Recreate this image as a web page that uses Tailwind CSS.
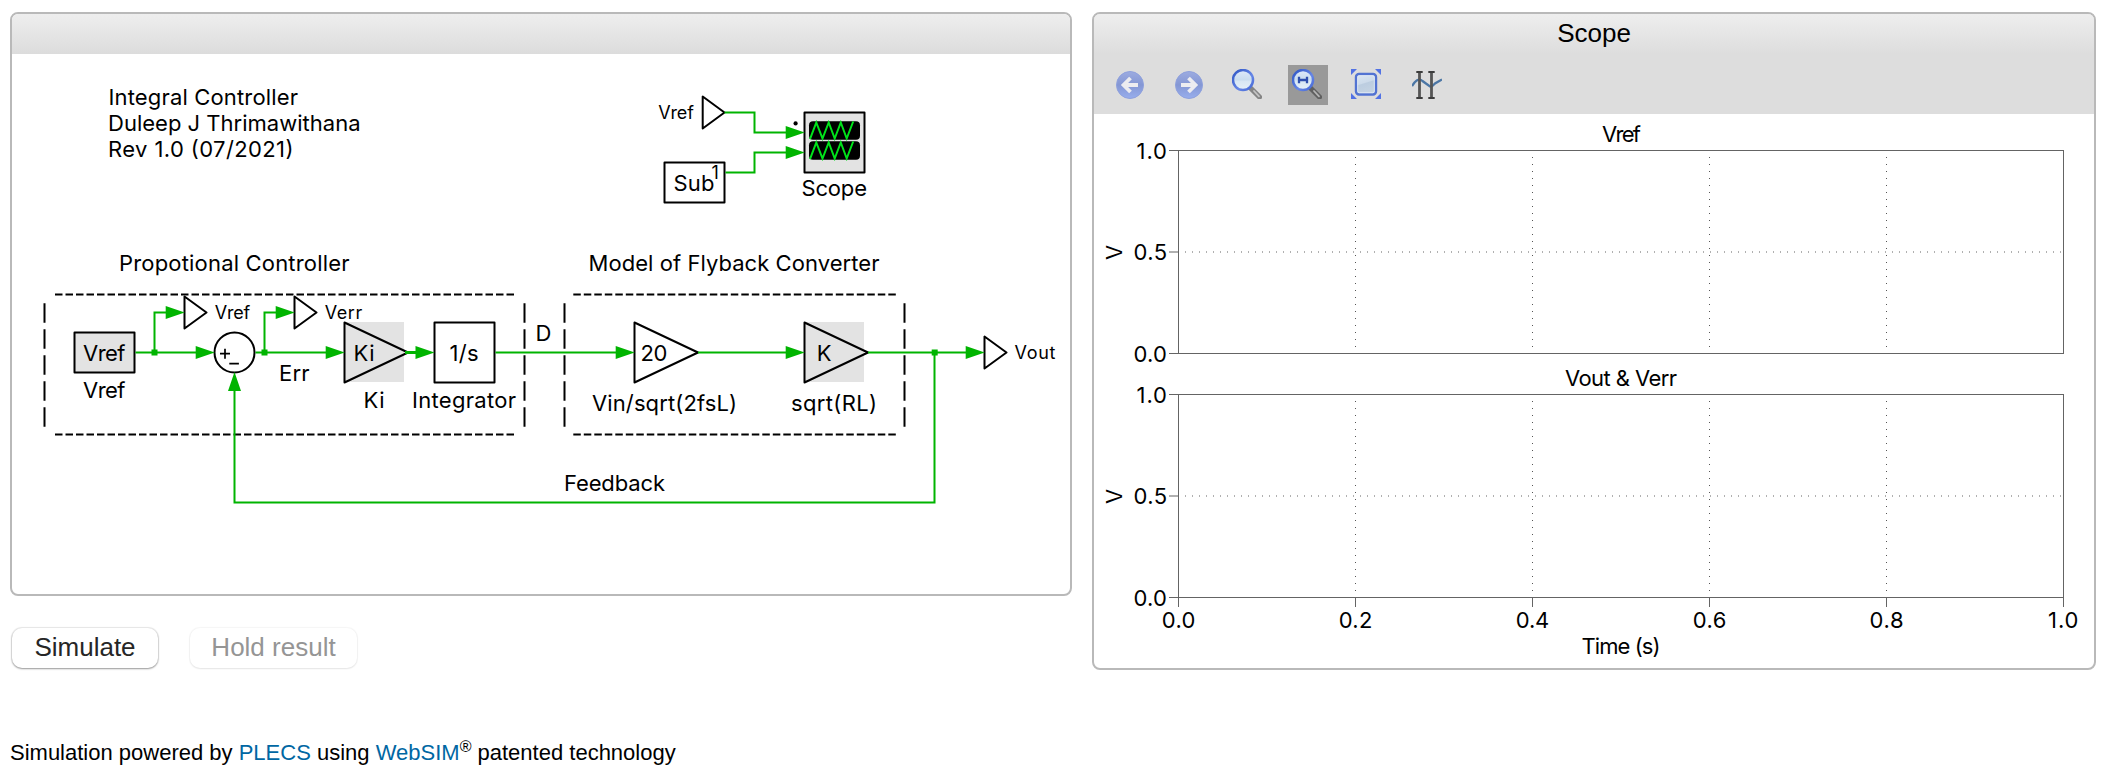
<!DOCTYPE html>
<html lang="en">
<head>
<meta charset="utf-8">
<title>Integral Controller</title>
<script src="https://cdn.jsdelivr.net/npm/@tailwindcss/browser@4"></script>
</head>
<body class="bg-white text-black font-['Liberation_Sans',Arial,sans-serif] overflow-hidden">
<main class="pt-3 pl-2.5">
  <div class="flex items-start gap-5">
    <div class="flex flex-col">
      <section class="w-[1062px] h-[584px] rounded-[8px] border-2 border-[#b9b9b9] overflow-hidden flex flex-col">
        <header class="h-10 shrink-0 bg-linear-to-b from-[#eeeeee] to-[#dcdcdc]"></header>
        <svg class="block w-[1058px] h-[540px] font-['Inter',sans-serif]" viewBox="12 54 1058 540">
          <g fill="none" stroke="#000" stroke-width="2">
            <path stroke-dasharray="7.5 3" d="M55 294.5H514.3M55 434.5H514.3M573.3 294.5H896M573.3 434.5H896"/>
            <path stroke-dasharray="19.4 6.6" d="M44.5 303.3V426.8M524.5 303.3V426.8M564.5 303.3V426.8M904.5 303.3V426.8"/>
          </g>
          <!-- Blocks -->
          <g fill="#e3e3e3">
            <rect x="344.5" y="322" width="59.5" height="60"/>
            <rect x="804.5" y="322" width="59.5" height="60"/>
          </g>
          <g fill="none" stroke="#000" stroke-width="2" stroke-linejoin="round">
            <rect x="74.5" y="332.5" width="60" height="40" fill="#e3e3e3"/>
            <rect x="434.5" y="322.5" width="60" height="60"/>
            <rect x="664.5" y="162.5" width="60" height="40"/>
            <rect x="804.5" y="112.5" width="60" height="60" fill="#e3e3e3"/>
            <circle cx="234.5" cy="352.5" r="20"/>
            <path stroke-width="1.7" d="M220 353.7h10M225 348.7v10M229.3 363.7h9.6"/>
            <path d="M344.5 322.5V382.5L408 352.5ZM634.5 322.5V382.5L698 352.5ZM804.5 322.5V382.5L868 352.5Z"/>
            <path d="M184.5 296.5V328.5L206.5 312.5ZM294.5 296.5V328.5L316.5 312.5ZM702.7 96.5V128.5L724.5 112.5ZM984.5 336.5V368.5L1006.5 352.5Z"/>
          </g>
          <!-- Scope screens -->
          <rect x="809" y="121.2" width="51" height="18.6" rx="4"/>
          <rect x="809" y="141.3" width="51" height="18.4" rx="4"/>
          <g fill="none" stroke="#00e31a" stroke-width="2">
            <path d="M810 139.2L816.3 122.5L822.5 138.5L828.7 122.5L834.7 138.5L840.8 122.5L846.7 138.5L853.2 121.5"/>
            <path d="M810 159.2L816.3 142.5L822.5 158.5L828.7 142.5L834.7 158.5L840.8 142.5L846.7 158.5L853.2 141.5"/>
          </g>
          <circle cx="795.6" cy="123.4" r="2.1"/>
          <!-- Signals -->
          <g fill="none" stroke="#00b400" stroke-width="2">
            <path d="M135.5 352.5H196M154.5 352.5V312.5H166M255.5 352.5H326M264.5 352.5V312.5H276M495.5 352.5H616M698 352.5H786M868 352.5H966M934.5 352.5V502.5H234.5V390"/>
            <path d="M724.5 112.5H754.5V132.5H786M725.5 172.5H754.5V152.5H786"/>
            <path stroke-width="3" d="M405 352.5H416"/>
          </g>
          <g fill="#00b400">
            <path d="M195.7 346v13l19-6.500zM165.700 306v13l19-6.500zM275.700 306v13l19-6.500zM325.700 346v13l19-6.500zM415.500 346v13l19-6.500zM615.700 346v13l19-6.500zM785.700 346v13l19-6.500zM965.700 346v13l19-6.500zM785.700 126v13l19-6.500zM785.700 146v13l19-6.500zM228 391h13l-6.500-19z"/>
            <rect x="151.500" y="349.500" width="6" height="6"/>
            <rect x="261.500" y="349.500" width="6" height="6"/>
            <rect x="931.700" y="349.500" width="6" height="6"/>
          </g>
          <g font-size="22">
            <text x="108.500" y="105.200" textLength="189.500">Integral Controller</text>
            <text x="108" y="131.200" textLength="252.500">Duleep J Thrimawithana</text>
            <text x="108" y="157" textLength="185.500">Rev 1.0 (07/2021)</text>
            <text x="119" y="271" textLength="230.500">Propotional Controller</text>
            <text x="588.500" y="271" textLength="291">Model of Flyback Converter</text>
            <text x="83" y="361" textLength="42.500">Vref</text>
            <text x="83" y="397.800" textLength="42.500">Vref</text>
            <text x="279" y="381" textLength="30.500">Err</text>
            <text x="353.500" y="361" textLength="21">Ki</text>
            <text x="363.500" y="408" textLength="21">Ki</text>
            <text x="449.500" y="361" textLength="29">1/s</text>
            <text x="412" y="408" textLength="104">Integrator</text>
            <text x="535.500" y="341">D</text>
            <text x="640.500" y="361" textLength="27">20</text>
            <text x="592" y="411" textLength="145">Vin/sqrt(2fsL)</text>
            <text x="816.800" y="361">K</text>
            <text x="791" y="411" textLength="86">sqrt(RL)</text>
            <text x="564" y="490.800" textLength="101">Feedback</text>
            <text x="801.500" y="195.500" textLength="65.500">Scope</text>
            <text x="673.500" y="191" textLength="41">Sub</text>
          </g>
          <g font-size="18">
            <text x="658.300" y="119" textLength="35.500">Vref</text>
            <text x="711.500" y="179">1</text>
            <text x="214.700" y="319.200" textLength="35.500">Vref</text>
            <text x="324.700" y="319.200" textLength="37.500">Verr</text>
            <text x="1014.500" y="359" textLength="41">Vout</text>
          </g>
        </svg>
      </section>
      <div class="flex gap-8 pl-0.5 pt-8">
        <button class="w-[146px] h-10 rounded-[10px] bg-white text-[26px] leading-[38px] pb-0.5 text-[#262626] shadow-[0_0_1px_1px_rgba(0,0,0,0.09),0_1px_2px_rgba(0,0,0,0.35)]">Simulate</button>
        <button class="w-[167px] h-10 rounded-[10px] bg-white text-[26px] leading-[38px] pb-0.5 text-[#959595] shadow-[0_0_1px_1px_rgba(0,0,0,0.04),0_1px_2px_rgba(0,0,0,0.07)]" disabled>Hold result</button>
      </div>
    </div>

    <section class="w-[1004px] h-[658px] rounded-[8px] border-2 border-[#b9b9b9] overflow-hidden flex flex-col">
      <header class="h-[100px] shrink-0 bg-[#dddddd]">
        <h1 class="h-10 bg-linear-to-b from-[#eeeeee] to-[#dddddd] text-[26px] leading-[38px] text-center">Scope</h1>
        <div class="flex gap-[19.33px] pl-4 pt-[11px]">
          <div class="w-10 h-10 pl-[5px] pt-[5px]">
            <svg class="w-[30px] h-[30px]" viewBox="0 0 30 30">
              <defs><linearGradient id="disc" x2="0" y2="1"><stop stop-color="#9cabe0"/><stop offset=".5" stop-color="#8497d4"/><stop offset="1" stop-color="#98aeed"/></linearGradient></defs>
              <circle cx="15" cy="15" r="13.500" fill="url(#disc)" stroke="#8ea0dc"/>
              <path d="M23 15H9M15.500 8L8.500 15L15.500 22" fill="none" stroke="#ececf0" stroke-width="3.800"/>
            </svg>
          </div>
          <div class="w-10 h-10 pl-[5px] pt-[5px]">
            <svg class="w-[30px] h-[30px]" viewBox="0 0 30 30">
              <circle cx="15" cy="15" r="13.500" fill="url(#disc)" stroke="#8ea0dc"/>
              <path d="M7 15H21M14.500 8L21.500 15L14.500 22" fill="none" stroke="#ececf0" stroke-width="3.800"/>
            </svg>
          </div>
          <div class="w-10 h-10 pl-[3px] pt-1">
            <svg class="w-[30px] h-[30px]" viewBox="0 0 30 30">
              <defs>
                <linearGradient id="rim" x2="1" y2="1"><stop stop-color="#2e55c4"/><stop offset=".6" stop-color="#6686e6"/><stop offset="1" stop-color="#4468d4"/></linearGradient>
                <linearGradient id="glass" x2="0" y2="1"><stop stop-color="#dfeafa"/><stop offset=".5" stop-color="#c9dcee"/><stop offset=".55" stop-color="#d8e7f4"/><stop offset="1" stop-color="#e6f0f8"/></linearGradient>
              </defs>
              <path d="M19 19.500L27.500 28" stroke="#858585" stroke-width="5.200" stroke-linecap="round"/>
              <path d="M22 22L27 27.300" stroke="#c4c4c4" stroke-width="1.800" stroke-linecap="round"/>
              <circle cx="11" cy="11" r="10" fill="url(#glass)" stroke="url(#rim)" stroke-width="2.500"/>
            </svg>
          </div>
          <div class="w-10 h-10 pl-1 pt-1 bg-[#999999]">
            <svg class="w-[30px] h-[30px]" viewBox="0 0 30 30">
              <path d="M19 19.500L27.500 28" stroke="#606060" stroke-width="5.200" stroke-linecap="round"/>
              <path d="M22 22L27 27.300" stroke="#b4b4b4" stroke-width="1.800" stroke-linecap="round"/>
              <circle cx="11" cy="11" r="10" fill="url(#glass)" stroke="url(#rim)" stroke-width="2.500"/>
              <path d="M7 7.800V14.200M15 7.800V14.200M7 11H15" stroke="#2f4fae" stroke-width="2.300" fill="none"/>
            </svg>
          </div>
          <div class="w-10 h-10 pl-1 pt-1">
            <svg class="w-[30px] h-[30px]" viewBox="0 0 30 30">
              <defs><linearGradient id="pane" x2=".3" y2="1"><stop stop-color="#dce7f3"/><stop offset=".5" stop-color="#cddbea"/><stop offset=".55" stop-color="#bccde0"/><stop offset="1" stop-color="#c4d3e2"/></linearGradient></defs>
              <path d="M0 0H6L0 6ZM24 0H30V6ZM0 24V30H6ZM30 24V30H24Z" fill="#5272e4"/>
              <rect x="5" y="5" width="20" height="20.500" rx="3" fill="url(#pane)" stroke="#5273d2" stroke-width="2.400"/>
              <rect x="6.700" y="6.700" width="16.600" height="17" rx="1.500" fill="none" stroke="#e4ecf6" stroke-width=".8"/>
            </svg>
          </div>
          <div class="w-10 h-10 pl-[5px] pt-1">
            <svg class="w-[30px] h-[30px]" viewBox="0 0 30 30">
              <path d="M0 17L2.500 13.500Q7 8.500 10.500 12L18 17.500Q20 18 23 14.500L30 10.500" fill="none" stroke="#4b76a5" stroke-width="2.300"/>
              <path d="M7.500 3V29M19.500 3V29" stroke="#555" stroke-width="2.800"/>
              <path d="M4.300 3H10.700M4.300 29H10.700M16.300 3H22.700M16.300 29H22.700" stroke="#3c3c3c" stroke-width="2"/>
            </svg>
          </div>
        </div>
      </header>
      <svg class="block w-[1000px] h-[554px] font-['Inter',sans-serif]" viewBox="1094 114 1000 554" font-size="22">
        <g fill="none" shape-rendering="crispEdges">
          <g stroke="#555" stroke-width="1" stroke-dasharray="1 6">
            <path d="M1355.500 150V353M1532.500 150V353M1709.500 150V353M1886.500 150V353"/>
            <path d="M1355.500 394V597M1532.500 394V597M1709.500 394V597M1886.500 394V597"/>
          </g>
          <path stroke="#b0b0b0" stroke-width="2" stroke-dasharray="1 6" d="M1178 252H2063M1178 496H2063"/>
          <path stroke="#b0b0b0" stroke-width="2" d="M1169 252H1178M1169 496H1178"/>
          <path stroke="#646464" d="M1169 150.500H2064M1169 353.500H2064M1169 394.500H2064M1169 597.500H2064M1178.500 150V354M2063.500 150V354M1178.500 394V607M2063.500 394V607M1355.500 597V607M1532.500 597V607M1709.500 597V607M1886.500 597V607"/>
        </g>
        <text x="1602" y="142" textLength="39">Vref</text>
        <text x="1565" y="386" textLength="112">Vout &amp; Verr</text>
        <text x="1581.500" y="654.300" textLength="79">Time (s)</text>
        <g>
          <text x="1136.500" y="158.700" textLength="30.500">1.0</text>
          <text x="1133.500" y="260" textLength="33.500">0.5</text>
          <text x="1133.500" y="361.700" textLength="33.500">0.0</text>
          <text x="1136.500" y="403" textLength="30.500">1.0</text>
          <text x="1133.500" y="504" textLength="33.500">0.5</text>
          <text x="1133.500" y="605.700" textLength="33.500">0.0</text>
        </g>
        <g>
          <text x="1161.800" y="627.700" textLength="33.500">0.0</text>
          <text x="1338.800" y="627.700" textLength="33.500">0.2</text>
          <text x="1515.800" y="627.700" textLength="33.500">0.4</text>
          <text x="1692.800" y="627.700" textLength="33.500">0.6</text>
          <text x="1869.500" y="627.700" textLength="34">0.8</text>
          <text x="2048" y="627.700" textLength="30.500">1.0</text>
        </g>
        <text text-anchor="middle" transform="translate(1122.300 252.500) rotate(-90)">V</text>
        <text text-anchor="middle" transform="translate(1122.300 496.500) rotate(-90)">V</text>
      </svg>
    </section>
  </div>
  <p class="pt-[69px] text-[22px] leading-7">Simulation powered by <a class="text-[#0067a3]">PLECS</a> using <a class="text-[#0067a3]">WebSIM</a><span class="inline-block text-[16px] leading-none -translate-y-2">®</span> patented technology</p>
</main>
</body>
</html>
